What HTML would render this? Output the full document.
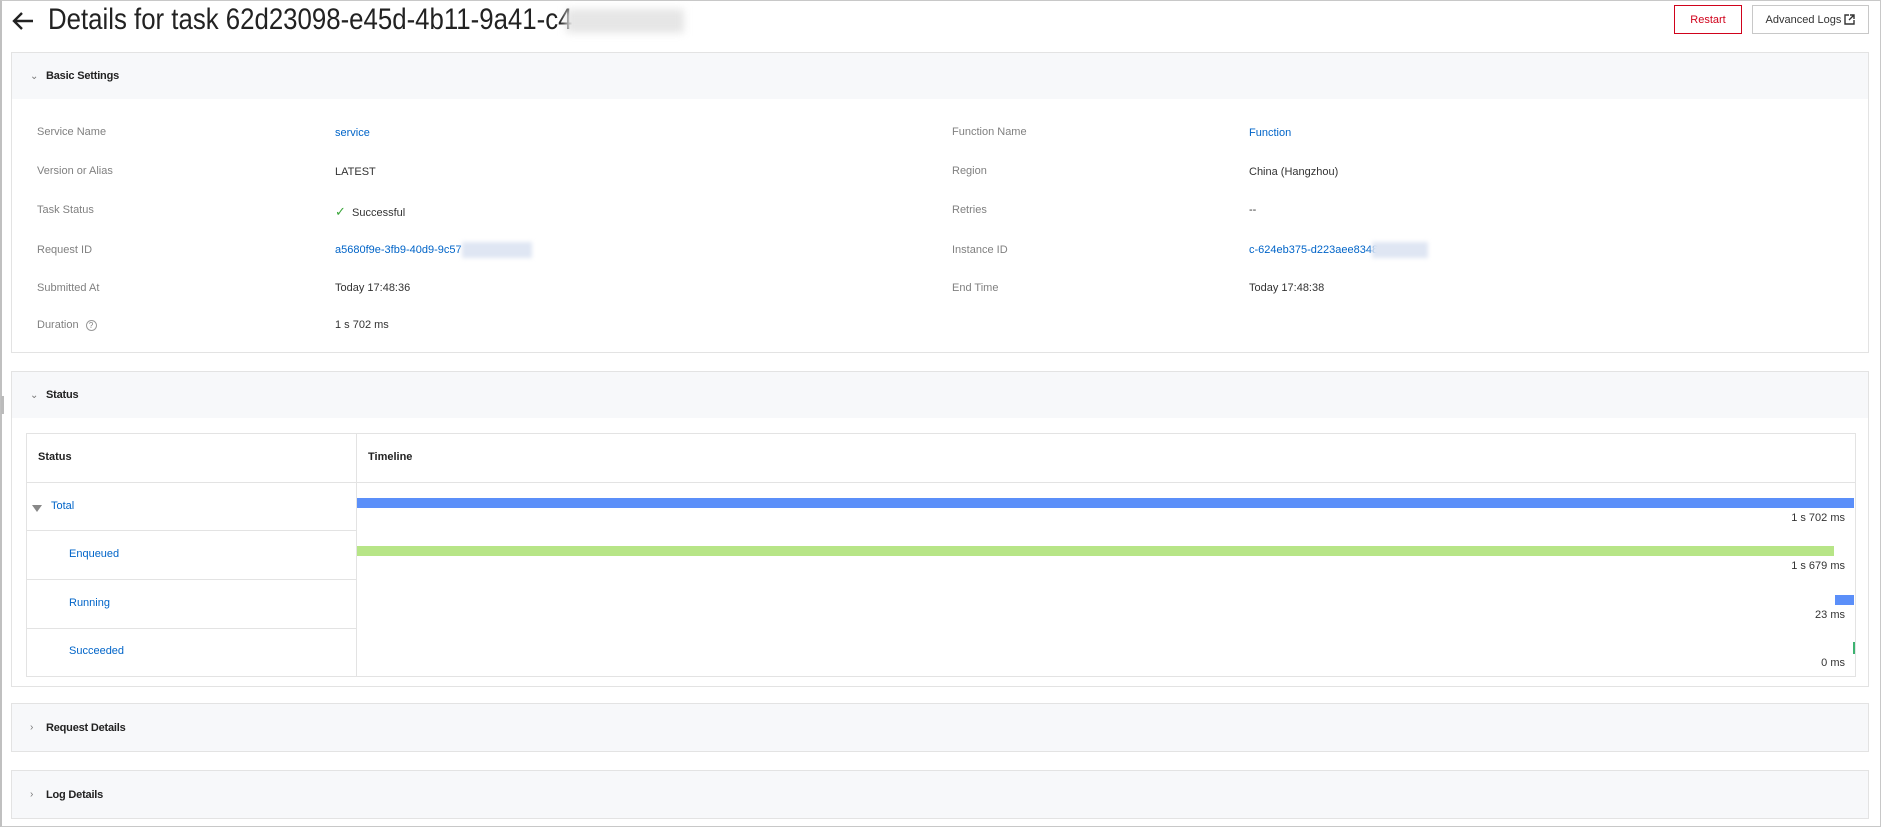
<!DOCTYPE html>
<html><head><meta charset="utf-8"><style>
*{box-sizing:border-box;margin:0;padding:0}
body{width:1881px;height:827px;background:#fff;font-family:"Liberation Sans",sans-serif;font-size:11px;color:#333;position:relative;overflow:hidden}
.abs{position:absolute}
.frame{left:0;top:0;width:1881px;height:827px;border:1px solid #c8c8c8;border-left:2px solid #c0c0c0}
.title{left:48px;top:3px;font-size:30px;color:#222;white-space:nowrap;transform-origin:left top;transform:scaleX(0.86)}
.btn{top:5px;height:29px;border:1px solid #c8c8c8;background:#fff;display:flex;align-items:center;justify-content:center;font-size:11px;color:#333}
.panel{left:11px;width:1858px;border:1px solid #e3e3e3;background:#fff}
.ph{height:46px;background:#f7f8fa;display:flex;align-items:center;font-weight:bold;font-size:11px;color:#222;letter-spacing:-0.2px}
.ph .chev{width:24px;padding-left:18px;color:#777;font-weight:normal;font-size:10px;margin-right:10px}
.lbl{color:#808080}
.lnk{color:#0064c8}
.blur{background:#dfe6f3;filter:blur(2px)}
.tb{left:26px;top:433px;width:1830px;height:244px;border:1px solid #e3e3e3}
.vl{background:#e3e3e3}
</style></head><body>
<div class="abs frame"></div>
<svg class="abs" style="left:11px;top:11px" width="24" height="20" viewBox="0 0 24 20"><path d="M22 10H3M11 2L3 10l8 8" fill="none" stroke="#222" stroke-width="2.4"/></svg>
<div class="abs title">Details for task 62d23098-e45d-4b11-9a41-c4</div>
<div class="abs" style="left:566px;top:9px;width:118px;height:24px;background:#e6e6e6;filter:blur(4px)"></div>
<div class="abs btn" style="left:1674px;width:68px;border-color:#d0021b;color:#d0021b">Restart</div>
<div class="abs btn" style="left:1752px;width:117px">Advanced Logs&nbsp;<svg width="11" height="11" viewBox="0 0 11 11"><path d="M5 1H1v9h9V6M6 1h4v4M10 1L5 6" fill="none" stroke="#333" stroke-width="1.4"/></svg></div>

<div class="abs panel" style="top:52px;height:301px">
<div class="ph"><span class="chev">⌄</span>Basic Settings</div>
</div>
<div class="abs lbl" style="left:37px;top:126px">Service Name</div>
<div class="abs lnk" style="left:335px;top:127px">service</div>
<div class="abs lbl" style="left:37px;top:165px">Version or Alias</div>
<div class="abs" style="left:335px;top:166px">LATEST</div>
<div class="abs lbl" style="left:37px;top:204px">Task Status</div>
<div class="abs" style="left:335px;top:204px"><span style="color:#3aa63a;font-size:13px">✓</span>&nbsp; Successful</div>
<div class="abs lbl" style="left:37px;top:244px">Request ID</div>
<div class="abs lnk" style="left:335px;top:244px">a5680f9e-3fb9-40d9-9c57</div>
<div class="abs blur" style="left:462px;top:242px;width:70px;height:16px"></div>
<div class="abs lbl" style="left:37px;top:282px">Submitted At</div>
<div class="abs" style="left:335px;top:282px">Today 17:48:36</div>
<div class="abs lbl" style="left:37px;top:319px">Duration <span style="display:inline-block;width:11px;height:11px;border:1px solid #999;border-radius:50%;font-size:8px;text-align:center;line-height:9px;margin-left:4px">?</span></div>
<div class="abs" style="left:335px;top:319px">1 s 702 ms</div>

<div class="abs lbl" style="left:952px;top:126px">Function Name</div>
<div class="abs lnk" style="left:1249px;top:127px">Function</div>
<div class="abs lbl" style="left:952px;top:165px">Region</div>
<div class="abs" style="left:1249px;top:166px">China (Hangzhou)</div>
<div class="abs lbl" style="left:952px;top:204px">Retries</div>
<div class="abs" style="left:1249px;top:204px">--</div>
<div class="abs lbl" style="left:952px;top:244px">Instance ID</div>
<div class="abs lnk" style="left:1249px;top:244px">c-624eb375-d223aee8348</div>
<div class="abs blur" style="left:1372px;top:242px;width:56px;height:16px"></div>
<div class="abs lbl" style="left:952px;top:282px">End Time</div>
<div class="abs" style="left:1249px;top:282px">Today 17:48:38</div>

<div class="abs" style="left:1px;top:396px;width:3px;height:18px;background:#bbb"></div>
<div class="abs panel" style="top:371px;height:316px">
<div class="ph"><span class="chev">⌄</span>Status</div>
</div>
<div class="abs tb"></div>
<div class="abs vl" style="left:356px;top:433px;width:1px;height:244px"></div>
<div class="abs vl" style="left:26px;top:482px;width:1830px;height:1px"></div>
<div class="abs vl" style="left:26px;top:530px;width:330px;height:1px"></div>
<div class="abs vl" style="left:26px;top:579px;width:330px;height:1px"></div>
<div class="abs vl" style="left:26px;top:628px;width:330px;height:1px"></div>
<div class="abs" style="left:38px;top:451px;font-weight:bold;color:#222">Status</div>
<div class="abs" style="left:368px;top:451px;font-weight:bold;color:#222">Timeline</div>
<div class="abs" style="left:32px;top:505px;width:0;height:0;border-left:5px solid transparent;border-right:5px solid transparent;border-top:7px solid #888"></div>
<div class="abs lnk" style="left:51px;top:500px">Total</div>
<div class="abs lnk" style="left:69px;top:548px">Enqueued</div>
<div class="abs lnk" style="left:69px;top:597px">Running</div>
<div class="abs lnk" style="left:69px;top:645px">Succeeded</div>
<div class="abs" style="left:357px;top:498px;width:1497px;height:10px;background:#5b8ff9"></div>
<div class="abs" style="right:36px;top:512px">1 s 702 ms</div>
<div class="abs" style="left:357px;top:546px;width:1477px;height:10px;background:#b7e587"></div>
<div class="abs" style="right:36px;top:560px">1 s 679 ms</div>
<div class="abs" style="left:1835px;top:595px;width:19px;height:10px;background:#5b8ff9"></div>
<div class="abs" style="right:36px;top:609px">23 ms</div>
<div class="abs" style="left:1853px;top:642px;width:2px;height:12px;background:#3cb371"></div>
<div class="abs" style="right:36px;top:657px">0 ms</div>

<div class="abs panel" style="top:703px;height:49px"><div class="ph" style="height:47px"><span class="chev">›</span>Request Details</div></div>
<div class="abs panel" style="top:770px;height:49px"><div class="ph" style="height:47px"><span class="chev">›</span>Log Details</div></div>
</body></html>
